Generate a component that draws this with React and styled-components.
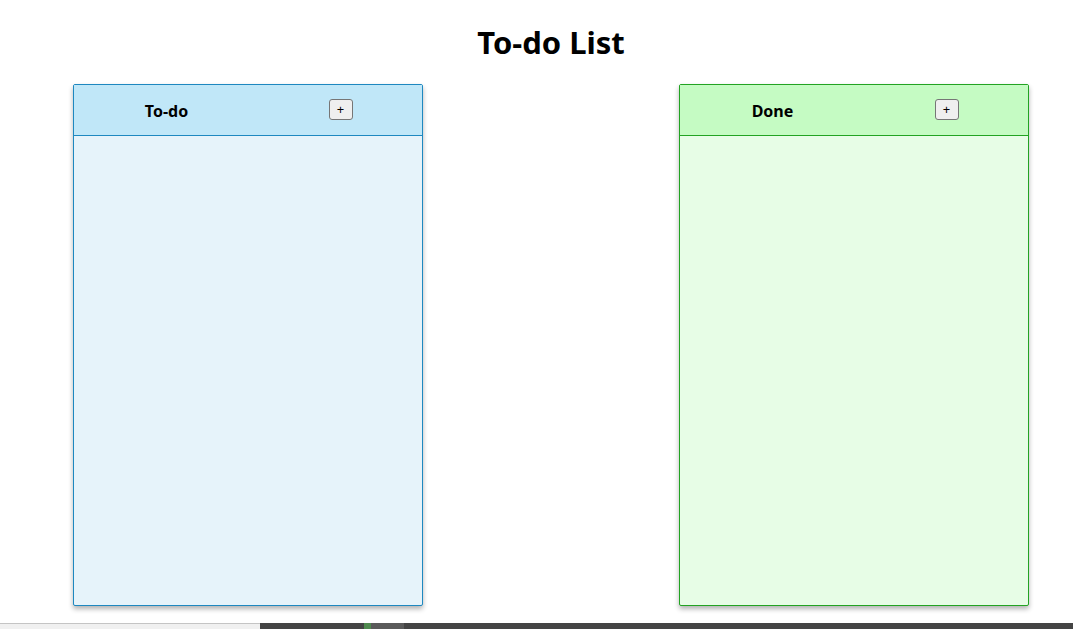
import React from "react";
import styled, { createGlobalStyle } from "styled-components";

const GlobalStyle = createGlobalStyle`
  html, body {
    margin: 0;
    padding: 0;
    background: #fff;
  }
  body {
    font-family: "Noto Sans", "Open Sans", sans-serif;
    color: #000;
  }
`;

const columns = [
  {
    name: "To-do",
    head: "#c0e7f8",
    body: "#e6f3fa",
    border: "#1e88c0",
  },
  {
    name: "Done",
    head: "#c5fbc3",
    body: "#e7fde6",
    border: "#22a322",
  },
];

const App = () => {
  return (
    <>
      <GlobalStyle />
      <Page>
        <Main>
          <Title>To-do List</Title>
          <Board>
            {columns.map((col) => (
              <Column key={col.name} $border={col.border} $bg={col.body}>
                <ColumnHead $bg={col.head} $border={col.border}>
                  <ColumnName>{col.name}</ColumnName>
                  <AddCell>
                    <AddButton>+</AddButton>
                  </AddCell>
                </ColumnHead>
              </Column>
            ))}
          </Board>
        </Main>
        <StatusStrip>
          <StripLight />
          <StripDark $w="104px" />
          <StripGreen />
          <StripMid />
          <StripDark $grow />
        </StatusStrip>
      </Page>
    </>
  );
};

export default App;

const Page = styled.div`
  height: 100vh;
  display: flex;
  flex-direction: column;
  overflow: hidden;
`;

const Main = styled.div`
  padding-left: 29px;
  display: flex;
  flex-direction: column;
  align-items: center;
`;

const Title = styled.h1`
  font-size: 31px;
  font-weight: 700;
  margin: 22px 0 0;
  line-height: 40px;
  height: 42px;
`;

const Board = styled.div`
  display: flex;
  justify-content: center;
  gap: 256px;
  margin-top: 20px;
`;

const Column = styled.div`
  width: 350px;
  height: 522px;
  box-sizing: border-box;
  border: 1px solid ${(p) => p.$border};
  border-radius: 2px;
  background: ${(p) => p.$bg};
  box-shadow: 0 3px 5px rgba(0, 0, 0, 0.3);
`;

const ColumnHead = styled.div`
  height: 51px;
  box-sizing: border-box;
  display: flex;
  align-items: center;
  background: ${(p) => p.$bg};
  border-bottom: 1px solid ${(p) => p.$border};
`;

const ColumnName = styled.div`
  width: 185px;
  text-align: center;
  font-size: 16px;
  font-weight: 700;
  margin-top: 1px;
`;

const AddCell = styled.div`
  flex: 1;
  display: flex;
  justify-content: center;
  margin-top: -2px;
`;

const AddButton = styled.button`
  width: 24px;
  height: 21px;
  padding: 0;
  font-family: "Noto Sans", sans-serif;
  font-size: 13px;
  line-height: 18px;
  background: #efefef;
  border: 1px solid #767676;
  border-radius: 3px;
  color: #000;
`;

const StatusStrip = styled.div`
  margin-top: auto;
  height: 6px;
  display: flex;
`;

const StripLight = styled.div`
  width: 260px;
  background: #f0f0f0;
  border-top: 1px solid #c4c4c4;
`;

const StripDark = styled.div`
  width: ${(p) => p.$w || "auto"};
  flex: ${(p) => (p.$grow ? 1 : "none")};
  background: #444444;
`;

const StripGreen = styled.div`
  width: 7px;
  background: #4f8a4f;
`;

const StripMid = styled.div`
  width: 33px;
  background: #5a5a5a;
`;
